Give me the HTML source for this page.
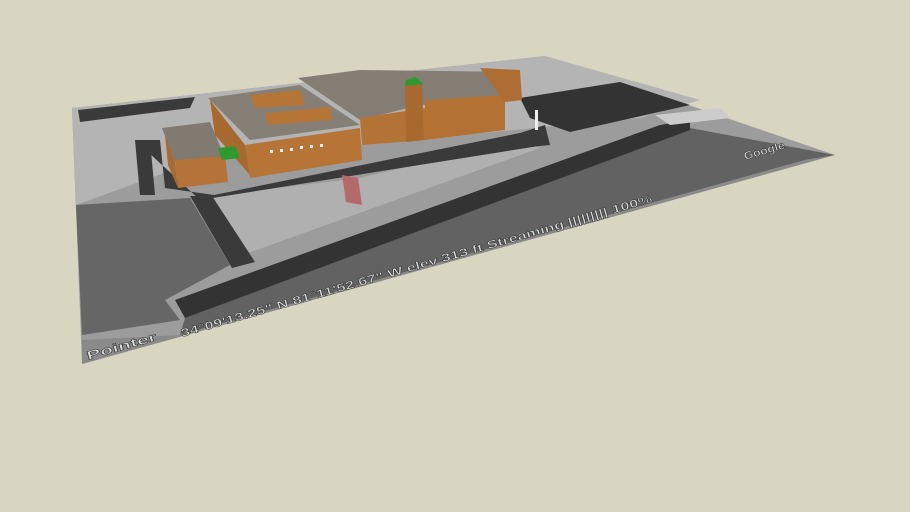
<!DOCTYPE html>
<html><head><style>
html,body{margin:0;padding:0;background:#d8d5c0;}
svg{display:block}
</style></head><body>
<svg width="910" height="512" viewBox="0 0 910 512" xmlns="http://www.w3.org/2000/svg">
<rect width="910" height="512" fill="#d8d5c0"/>
<polygon points="72,108 545,56 835,155 82,364" fill="#9c9c9c"/>
<polygon points="72,108 545,56 700,100 640,118 200,160 76,205" fill="#b4b4b4"/>
<polygon points="78,110 195,97 190,108 80,122" fill="#3a3a3a"/>
<polygon points="76,205 190,198 230,265 165,300 180,320 82,335" fill="#666"/>
<polygon points="185,318 690,128 835,155 805,160 180,335" fill="#626262"/>
<polygon points="180,335 805,160 835,155 82,364 82,340" fill="#8a8a8a"/>
<polygon points="212,196 360,178 520,140 540,148 240,256" fill="#b0b0b0"/>
<polygon points="135,140 160,140 165,188 214,195 520,133 545,145 200,200" fill="#3a3a3a"/>
<polygon points="135,140 150,140 155,195 140,195" fill="#3a3a3a"/>
<polygon points="190,196 212,196 255,262 232,268" fill="#3a3a3a"/>
<polygon points="175,300 660,125 690,120 690,130 185,318" fill="#333"/>
<polygon points="520,133 545,125 550,145 530,147" fill="#3a3a3a"/>
<polygon points="520,98 620,82 690,105 570,132 530,118" fill="#333"/>
<polygon points="655,115 720,108 730,118 670,125" fill="#ccc"/>
<polygon points="162,128 210,122 225,158 175,162" fill="#807a70"/>
<polygon points="165,135 175,162 178,188 168,165" fill="#a86a34"/>
<polygon points="175,160 225,156 228,182 178,188" fill="#b47338"/>
<polygon points="208,98 300,85 360,125 250,140" fill="#867f75"/>
<polygon points="210,100 245,145 250,175 215,135" fill="#a8692f"/>
<polygon points="245,145 360,128 362,160 250,178" fill="#b67536"/>
<polygon points="298,78 360,70 520,72 505,102 420,105 360,120" fill="#847d74"/>
<polygon points="360,118 425,108 425,140 362,145" fill="#b47336"/>
<polygon points="425,100 505,95 505,130 425,140" fill="#b37234"/>
<polygon points="480,68 520,70 522,100 505,102" fill="#ad6d33"/>
<polygon points="250,95 300,90 305,105 255,108" fill="#b57537"/>
<polygon points="265,113 330,107 332,120 268,125" fill="#b57537"/>
<polygon points="405,86 422,84 424,140 406,142" fill="#a8692f"/>
<polygon points="406,80 415,77 424,84 405,86" fill="#2e9a2e"/>
<polygon points="218,148 235,146 240,158 222,160" fill="#2e9a2e"/>
<polygon points="342,175 358,178 362,205 346,202" fill="#b46a6a"/>
<rect x="535" y="110" width="3" height="20" fill="#eee"/>
<g fill="#eee"><rect x="270" y="150" width="3" height="3"/><rect x="280" y="149" width="3" height="3"/><rect x="290" y="148" width="3" height="3"/><rect x="300" y="146" width="3" height="3"/><rect x="310" y="145" width="3" height="3"/><rect x="320" y="144" width="3" height="3"/></g>
<g font-family="Liberation Sans, sans-serif" font-weight="bold" fill="#ddd" stroke="#333" stroke-width="0.5">
<text x="88" y="360" font-size="12" textLength="72" lengthAdjust="spacingAndGlyphs" transform="rotate(-16 88 360)">Pointer</text>
<text x="182" y="337" font-size="11" textLength="490" lengthAdjust="spacingAndGlyphs" transform="rotate(-16 182 337)">34°09'13.25" N    81°11'52.67" W    elev  313 ft  Streaming ||||||||| 100%</text>
<text x="745" y="160" font-size="11" textLength="42" lengthAdjust="spacingAndGlyphs" transform="rotate(-16 745 160)">Google</text>
</g>
</svg>
</body></html>
